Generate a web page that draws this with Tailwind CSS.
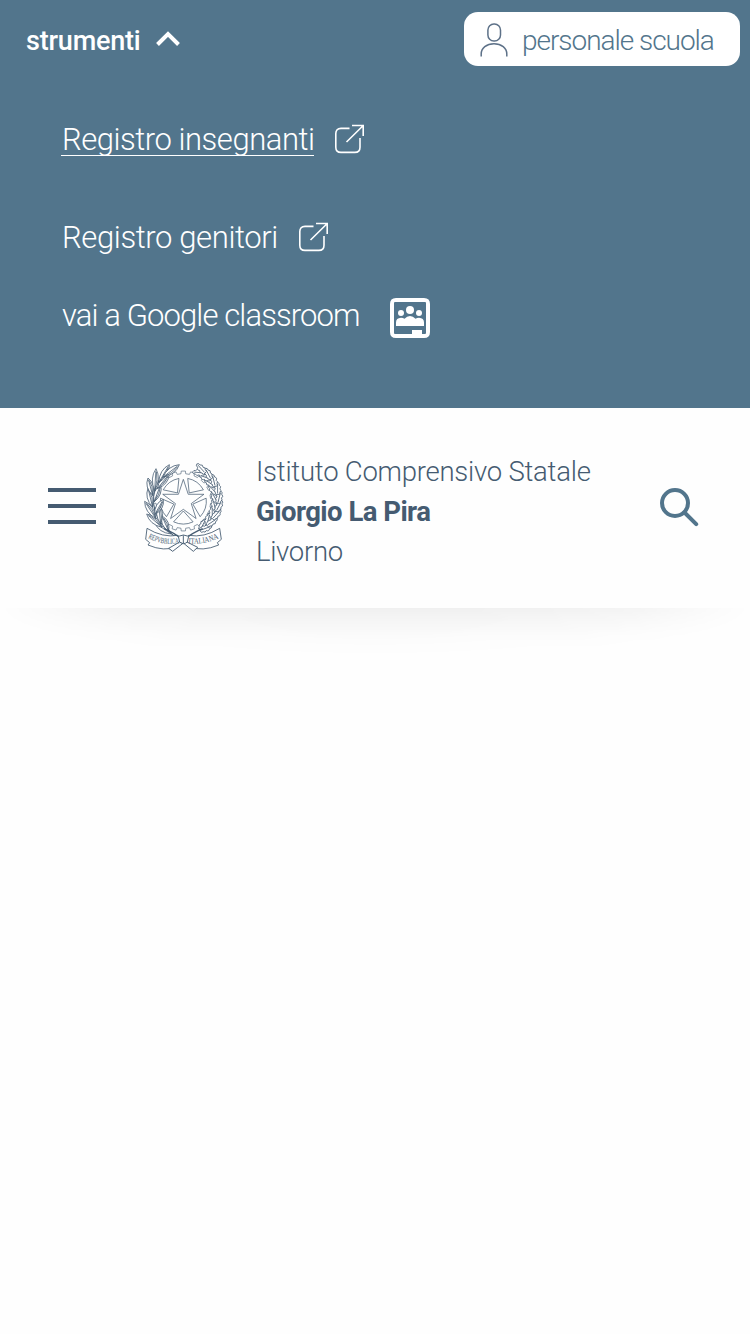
<!DOCTYPE html>
<html lang="it">
<head>
<meta charset="utf-8">
<title>Istituto Comprensivo Statale Giorgio La Pira</title>
<script src="https://cdn.jsdelivr.net/npm/@tailwindcss/browser@4"></script>
</head>
<body class="bg-[#fefefe] font-['Roboto','Liberation_Sans',sans-serif] w-[750px] h-[1334px] overflow-hidden">
<section class="h-[408px] bg-[#52758c] text-white">
  <div class="flex justify-between items-start pl-[26px] pr-[10px] pt-3">
    <button class="flex items-center h-14 gap-[15px]">
      <span class="text-[27px] font-medium leading-[56px] pt-0.5 w-[115px] text-left whitespace-nowrap tracking-[-0.2px]">strumenti</span>
      <svg class="w-6 h-[15px] -mt-1" viewBox="0 0 24 15" fill="none" stroke="white" stroke-width="4"><path d="M1.5 13.5 12 3l10.500 10.500"/></svg>
    </button>
    <a class="flex items-center h-[54px] w-[276px] rounded-[14px] bg-white text-[#52758c] pl-4 gap-[14px]">
      <svg class="w-7 h-[34px] mt-0.5 text-[#5d7188]" viewBox="0 0 28 34" fill="none" stroke="currentColor" stroke-width="1.500"><rect x="7.900" y="1" width="12.600" height="17" rx="6"/><path d="M1.200 33.500V31C1.200 25 6.500 20.700 14 20.700S26.800 25 26.800 31v2.500"/></svg>
      <span class="text-[28px] font-[350] leading-[54px] pt-[3px] whitespace-nowrap tracking-[-1.03px]">personale scuola</span>
    </a>
  </div>
  <nav class="pl-[62px] pt-[50px] text-[31px] font-[350] whitespace-nowrap">
    <a class="flex items-center h-11">
      <span class="relative w-[252px] leading-[44px] tracking-[-0.46px]">Registro insegnanti<i class="absolute left-[-1px] top-[37px] w-[253px] h-px bg-white"></i></span>
      <svg class="w-[30px] h-[30px] ml-5 -mt-0.5" viewBox="0 0 30 30" fill="none" stroke="white" stroke-width="1.600"><path d="M15.500 4.400H7Q1.800 4.400 1.800 9.600V23.200Q1.800 28.400 7 28.400H20.800Q26 28.400 26 23.200V14M18 1.500H29.200V12M29 1.700 12.500 18"/></svg>
    </a>
    <a class="flex items-center h-11 mt-[54px]">
      <span class="w-[216px] leading-[44px] tracking-[-0.38px]">Registro genitori</span>
      <svg class="w-[30px] h-[30px] ml-5 -mt-0.5" viewBox="0 0 30 30" fill="none" stroke="white" stroke-width="1.600"><path d="M15.500 4.400H7Q1.800 4.400 1.800 9.600V23.200Q1.800 28.400 7 28.400H20.800Q26 28.400 26 23.200V14M18 1.500H29.200V12M29 1.700 12.500 18"/></svg>
    </a>
    <a class="flex items-start h-11 mt-[34px]">
      <span class="w-[298px] leading-[44px] tracking-[-0.88px]">vai a Google classroom</span>
      <svg class="w-10 h-10 ml-[30px] mt-1" viewBox="0 0 40 40" fill="white"><path fill-rule="evenodd" d="M6 0H34Q40 0 40 6V34Q40 40 34 40H6Q0 40 0 34V6Q0 0 6 0ZM5 4Q4 4 4 5V35Q4 36 5 36H22V32H32V36H35Q36 36 36 35V5Q36 4 35 4Z"/><circle cx="20" cy="12" r="4"/><circle cx="11" cy="15" r="3"/><circle cx="29" cy="15" r="3"/><path d="M6 28V24.500Q6 20 11 19.700Q13 19.700 14.500 20.700Q17 18 20 18T25.500 20.700Q27 19.700 29 19.700Q34 20 34 24.500V28Z"/></svg>
    </a>
  </nav>
</section>
<header class="h-[200px] flex items-start text-[#455b71]">
  <button class="flex flex-col gap-3 ml-12 mt-20 w-12" aria-label="Menu"><i class="h-1 w-12 bg-[#455b71]"></i><i class="h-1 w-12 bg-[#455b71]"></i><i class="h-1 w-12 bg-[#455b71]"></i></button>
  <svg id="emblem" class="w-20 h-[90px] ml-12 mt-[54px]" viewBox="30 30 240 270" fill="none" stroke="#455b71" stroke-width="2.200"></svg>
  <div class="ml-8 mt-[44px] w-[340px] text-[27.5px] leading-10 whitespace-nowrap">
    <p class="font-[350] tracking-[-0.24px]">Istituto Comprensivo Statale</p>
    <p class="font-bold tracking-[-0.54px]">Giorgio La Pira</p>
    <p class="font-[350] tracking-[-0.3px]">Livorno</p>
  </div>
  <svg class="w-10 h-10 ml-16 mt-[79px]" viewBox="0 0 40 40" fill="none" stroke="#52758c" stroke-width="4" stroke-linecap="round"><circle cx="15" cy="16" r="13"/><path d="M24.500 25.500 36.200 37.200"/></svg>
</header>
<div class="h-[52px] bg-[linear-gradient(to_bottom,rgba(0,0,0,0.056)_0%,rgba(0,0,0,0.031)_28%,rgba(0,0,0,0.012)_55%,rgba(0,0,0,0.003)_80%,transparent_100%)] [mask-image:radial-gradient(ellipse_50%_110%_at_50%_0,black_0%,rgba(0,0,0,0.95)_40%,rgba(0,0,0,0.7)_70%,rgba(0,0,0,0.35)_85%,transparent_100%)]"></div>
<script>
const cx = 148, cy = 147;
const pt = (r, deg, y = cy) => [cx + r * Math.cos(deg * Math.PI / 180), y + r * Math.sin(deg * Math.PI / 180)].map(v => v.toFixed(1)).join(' ');
let out = '';
// Five-pointed star
let star = [];
for (let i = 0; i < 10; i++) star.push(pt(i % 2 ? 25 : 65, -90 + i * 36));
out += `<path d="M${star.join('L')}Z"/>`;
// Panels between the points
for (let i = 0; i < 5; i++) {
  const a = -54 + i * 72;
  out += `<path d="M${pt(30, a)}L${pt(69, a - 25)}A69 69 0 0 1 ${pt(69, a + 25)}Z"/>`;
}
// Cogwheel rim
let gear = [];
for (let i = 0; i < 20; i++) {
  const a = i * 18;
  gear.push(pt(82, a - 5), pt(90, a - 4), pt(90, a + 4), pt(82, a + 5));
}
out += `<path stroke-width="1.800" d="M${gear.join('L')}Z"/>`;
// Olive branch: each leaf runs from its base to its tip
const olive = [
  [112, 246, 62, 212], [104, 238, 84, 192], [84, 226, 38, 186], [80, 216, 74, 158],
  [66, 200, 32, 148], [62, 188, 88, 142], [56, 166, 42, 108], [60, 150, 80, 98],
  [56, 130, 42, 78], [62, 116, 66, 50], [70, 110, 106, 66], [74, 92, 106, 38], [86, 76, 136, 38]
];
out += '<path stroke-width="3" d="M126 256Q62 214 58 150Q58 94 92 66"/>';
for (const [x1, y1, x2, y2] of olive) {
  const len = Math.hypot(x2 - x1, y2 - y1), a = Math.atan2(y2 - y1, x2 - x1) * 180 / Math.PI;
  out += `<g transform="translate(${x1} ${y1}) rotate(${a.toFixed(1)})"><path fill="#fefefe" d="M0 0Q${len * .55} -18 ${len} 0Q${len * .55} 18 0 0ZM0 0H${len * .9}M4 1Q${len * .5} 8 ${len * .85} 2"/></g>`;
}
// Oak branch
for (let i = 0; i < 9; i++) {
  const a = 52 - i * 14;
  for (const [r, tilt] of [[95, -25], [108, 18]]) {
    const [x, y] = pt(r, a, 144).split(' ');
    out += `<g transform="translate(${x} ${y}) rotate(${a - 90 + tilt})"><path fill="#fefefe" stroke-width="2.300" d="M-17 0Q-19 -9 -10 -7Q-5 -13 0 -7Q7 -13 11 -5Q18 -7 20 0Q17 7 11 5Q7 13 0 7Q-5 13 -10 7Q-19 9 -17 0ZM-14 0H15"/></g>`;
  }
}
// Ribbon, stems and motto
out += `<path stroke-width="2.600" fill="#fefefe" d="M39 229 35 262 47 272 42 279Q90 300 130 284L144 269 132 250Q86 258 39 229ZM257 229 262 262 250 272 254 279Q205 300 166 284L153 269 164 250Q210 258 257 229Z"/>
<path stroke-width="4" d="M90 230Q122 243 142 261L182 292M206 230Q174 243 154 261L111 295"/>
<path stroke-width="2.800" fill="#fefefe" d="M133 253Q148 245 164 253L160 270Q148 280 137 270ZM137 270 104 289 116 298 148 273M159 270 191 286 178 298 148 273M148 250V273"/>
<path id="mottoLeft" stroke="none" d="M42 258Q90 284 138 273"/><path id="mottoRight" stroke="none" d="M163 274Q211 280 262 255"/>
<g fill="#455b71" stroke="none" font-family="Liberation Serif, serif" font-size="24"><text><textPath href="#mottoLeft" textLength="97" lengthAdjust="spacingAndGlyphs">REPVBBLICA</textPath></text><text><textPath href="#mottoRight" textLength="94" lengthAdjust="spacingAndGlyphs">ITALIANA</textPath></text></g>`;
document.getElementById('emblem').innerHTML = out;
</script>
</body>
</html>
